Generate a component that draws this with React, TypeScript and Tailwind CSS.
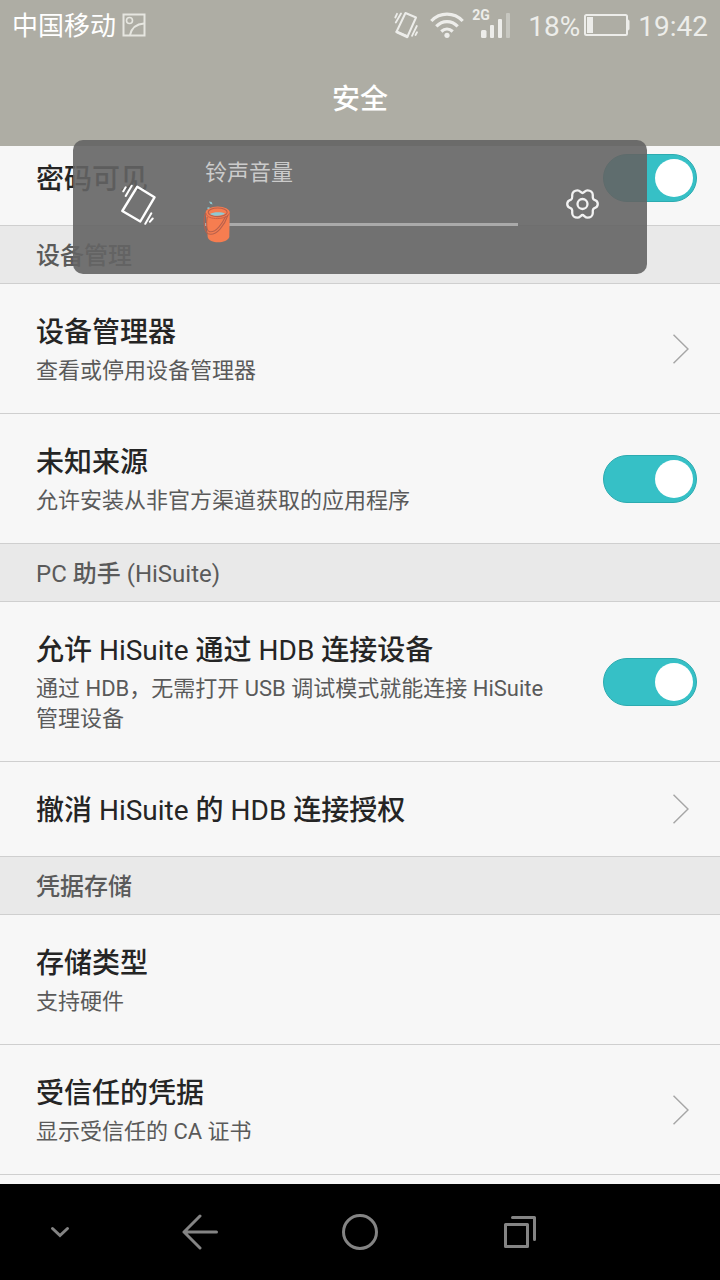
import { useState } from "react";

type Item = {
  id: string;
  title: string;
  summary?: string;
  kind: "switch" | "link" | "plain";
};

type Group = {
  heading?: string;
  items: Item[];
};

const groups: Group[] = [
  {
    items: [{ id: "password-visible", title: "密码可见", kind: "switch" }],
  },
  {
    heading: "设备管理",
    items: [
      {
        id: "device-admin",
        title: "设备管理器",
        summary: "查看或停用设备管理器",
        kind: "link",
      },
      {
        id: "unknown-sources",
        title: "未知来源",
        summary: "允许安装从非官方渠道获取的应用程序",
        kind: "switch",
      },
    ],
  },
  {
    heading: "PC 助手 (HiSuite)",
    items: [
      {
        id: "hdb",
        title: "允许 HiSuite 通过 HDB 连接设备",
        summary: "通过 HDB，无需打开 USB 调试模式就能连接 HiSuite 管理设备",
        kind: "switch",
      },
      { id: "revoke-hdb", title: "撤消 HiSuite 的 HDB 连接授权", kind: "link" },
    ],
  },
  {
    heading: "凭据存储",
    items: [
      {
        id: "storage-type",
        title: "存储类型",
        summary: "支持硬件",
        kind: "plain",
      },
      {
        id: "trusted",
        title: "受信任的凭据",
        summary: "显示受信任的 CA 证书",
        kind: "link",
      },
    ],
  },
];

// Latin words stay regular while the Chinese around them is medium
const MixedText = ({ text }: { text: string }) => (
  <>
    {text.split(/([A-Za-z() ]+)/).map((part, i) =>
      i % 2 ? (
        <span key={i} className="font-normal">
          {part}
        </span>
      ) : (
        part
      )
    )}
  </>
);

const StatusBar = () => (
  <div className="flex h-[50px] items-center justify-between px-3">
    <div className="flex items-center gap-1.5">
      <span className="pt-0.5 text-[26px] leading-[50px] text-white">中国移动</span>
      <svg width="24" height="24" viewBox="0 0 24 24" fill="none" stroke="#e6e6e0" strokeWidth="2">
        <rect x="1.5" y="1.5" width="21" height="21" />
        <circle cx="7.5" cy="7.5" r="3" strokeWidth="1.6" />
        <path d="M8 22 C9.5 15.5 14.5 11 22 10.5" />
      </svg>
    </div>

    <div className="flex items-center text-[#ededea]">
      <svg width="24" height="28" viewBox="0 0 24 28" fill="none" stroke="currentColor" strokeLinecap="round">
        <path d="M11.5 2 L22 6.5 L13.5 25.5 L2.5 20.8 Z" strokeWidth="2" strokeLinejoin="round" />
        <path d="M3 21 L13 25.6" strokeWidth="3" />
        <path d="M1.3 6.5 L3 2.8 M1.8 11.5 L7 2.5 M18 24.8 L22.8 15 M21.5 24 L23 21.2" strokeWidth="1.8" />
      </svg>
      <svg className="ml-3" width="34" height="28" viewBox="0 0 34 28" fill="none" stroke="currentColor" strokeWidth="3.2">
        <path d="M1.3 10 C10 0.8 24 0.8 32.7 10" />
        <path d="M6.3 15.4 C12.5 9 21.5 9 27.7 15.4" />
        <path d="M11.3 20.5 C14.8 17.2 19.2 17.2 22.7 20.5" />
        <circle cx="17" cy="24.3" r="2.6" fill="currentColor" stroke="none" />
      </svg>
      <div className="relative ml-2 h-7 w-10">
        <span className="absolute -top-1 left-0 text-sm font-bold leading-4">2G</span>
        <svg width="40" height="28" viewBox="0 0 40 28" fill="currentColor">
          <rect x="9" y="19" width="5.5" height="8" rx="1.5" />
          <rect x="18" y="14" width="4" height="13" rx="1" />
          <rect x="26" y="8" width="4" height="19" rx="1" />
          <rect x="34" y="2" width="4" height="25" rx="1" opacity="0.4" />
        </svg>
      </div>
      <span className="ml-4 pt-1 text-[28px] leading-[46px]">18%</span>
      <svg className="ml-1" width="46" height="24" viewBox="0 0 46 24" fill="none">
        <rect x="1" y="2" width="42" height="20" rx="1.5" stroke="currentColor" strokeWidth="2" />
        <rect x="3" y="4" width="6" height="16" fill="currentColor" />
        <path d="M43 7 h1 a1 1 0 0 1 1 1 v8 a1 1 0 0 1 -1 1 h-1 z" fill="currentColor" stroke="currentColor" />
      </svg>
      <span className="ml-2 pt-1 text-[28px] leading-[46px]">19:42</span>
    </div>
  </div>
);

const Chevron = () => (
  <svg className="mr-2 shrink-0" width="16" height="30" viewBox="0 0 16 30" fill="none" stroke="#a6a6a6" strokeWidth="1.5">
    <path d="M0.5 0.8 L15 15 L0.5 29.2" />
  </svg>
);

const Switch = ({ id }: { id: string }) => {
  const [on, setOn] = useState(true);
  return (
    <span className="relative h-12 w-[94px] shrink-0">
      <input
        id={id}
        type="checkbox"
        checked={on}
        onChange={() => setOn(!on)}
        className="peer block h-12 w-[94px] cursor-pointer appearance-none rounded-full border border-[#b5b5b5] bg-[#c8c8c8] checked:border-[#2cabb0] checked:bg-[#36c0c6]"
      />
      <span className="pointer-events-none absolute left-1 top-[5px] size-[38px] rounded-full bg-white peer-checked:left-auto peer-checked:right-1" />
    </span>
  );
};

const rowClass =
  "flex w-full items-center justify-between border-b border-[#cfcfcf] py-[27px] pl-9 pr-[23px] text-left";

const Row = ({ item }: { item: Item }) => {
  const text = (
    <span className="block max-w-[calc(100%-150px)]">
      <span className="block pt-1 text-[28px] font-medium leading-9 text-[#252525]">
        <MixedText text={item.title} />
      </span>
      {item.summary && (
        <span className="block pt-[5px] text-[22px] leading-[30px] text-[#5a5a5a]">
          {item.summary}
        </span>
      )}
    </span>
  );

  if (item.kind === "switch") {
    return (
      <label htmlFor={item.id} className={rowClass}>
        {text}
        <span className="-my-1 flex">
          <Switch id={item.id} />
        </span>
      </label>
    );
  }
  if (item.kind === "link") {
    return (
      <a href={`#${item.id}`} className={rowClass}>
        {text}
        <Chevron />
      </a>
    );
  }
  return <div className={rowClass}>{text}</div>;
};

const Bucket = () => (
  <svg width="28" height="44" viewBox="0 0 28 44">
    <path d="M2.7 13 L4.7 37 C6 44 24 44 26.3 37 L26.7 12 Z" fill="#f67d50" />
    <ellipse cx="14.7" cy="12.5" rx="12" ry="6" fill="#f67d50" />
    <path d="M2.8 13 C3.5 21 26 20 26.6 12.5" fill="none" stroke="#c9624a" />
    <ellipse cx="14.7" cy="12.3" rx="9.5" ry="4.3" fill="#f67d50" stroke="#b9614c" strokeWidth="1.1" />
    <path d="M7 14 C10 11.8 19 11.8 22 13.6 C19 16.4 10 16.4 7 14 Z" fill="#8fc9d3" />
    <path
      d="M2.6 13 C0.4 18 0.6 31 5 33.8 C14 36.5 22 24 25 15 M4.2 17 C3 24 3.6 31 6.5 31.6 C13 33 19.5 23 22.6 16.5"
      fill="none"
      stroke="#b9614c"
      strokeWidth="1.1"
    />
    <path d="M6 1.5 L8.6 2 L9.6 4.4 L7.2 3.8 Z M4.8 7.2 L6.8 7.5 L6 9 L4 8.6 Z" fill="#8fc9d3" />
  </svg>
);

const VolumePanel = () => {
  const [volume, setVolume] = useState(0);
  return (
    <div className="absolute inset-x-[73px] top-[140px] flex h-[134px] items-center rounded-[10px] bg-[#646464]/90 pb-1.5">
      <button type="button" aria-label="振动" className="flex w-[132px] justify-center pr-0.5">
        <svg width="36" height="42" viewBox="0 0 36 42" fill="none" stroke="#fff" strokeLinecap="round">
          <path d="M17.3 3.7 L34.5 14.3 L20.3 38.5 L2.3 28 Z" strokeWidth="2.4" strokeLinejoin="round" />
          <path d="M3.3 8.3 L5.7 4.3 M5.7 13 L11.7 2.7 M25.3 40.8 L31.3 30.3 M29.8 38.8 L32.7 35.5" strokeWidth="2" />
        </svg>
      </button>
      <div className="flex-1 self-start pt-[18px]">
        <label htmlFor="ring-volume" className="block text-[22px] leading-[30px] text-[#cbcbcb]">
          铃声音量
        </label>
        <div className="relative mt-3 flex h-11 items-center pt-1">
          <div className="h-[3px] w-full bg-[#aaa]" />
          <div
            className="pointer-events-none absolute -left-0.5 top-0"
            style={{ marginLeft: `${volume * 0.9}%` }}
          >
            <Bucket />
          </div>
          <input
            id="ring-volume"
            type="range"
            min={0}
            max={100}
            value={volume}
            onChange={(e) => setVolume(Number(e.target.value))}
            className="absolute inset-0 h-full w-full opacity-0"
          />
        </div>
      </div>
      <button type="button" aria-label="设置" className="flex w-[129px] justify-center">
        <svg width="33" height="30" viewBox="0 0 33 30" fill="none" stroke="#f2f2f2" strokeWidth="2.3" strokeLinejoin="round">
          <path d="M16.5 4 C18 4 19 1.3 21.5 1.3 C24.5 1.3 26.8 3.5 26.8 6 C26.8 8 26.3 9.8 28 10.6 C30.5 11.4 31.8 12.8 31.8 15 C31.8 17.2 30.5 18.6 28 19.4 C26.3 20.2 26.8 22 26.8 24 C26.8 26.5 24.5 28.7 21.5 28.7 C19 28.7 18 26 16.5 26 C15 26 14 28.7 11.5 28.7 C8.5 28.7 6.2 26.5 6.2 24 C6.2 22 6.7 20.2 5 19.4 C2.5 18.6 1.2 17.2 1.2 15 C1.2 12.8 2.5 11.4 5 10.6 C6.7 9.8 6.2 8 6.2 6 C6.2 3.5 8.5 1.3 11.5 1.3 C14 1.3 15 4 16.5 4 Z" />
          <circle cx="16.5" cy="15" r="5" />
        </svg>
      </button>
    </div>
  );
};

const navButton = "flex h-full flex-1 items-center justify-center";

const NavBar = () => (
  <nav className="flex h-24 bg-black text-[#848484]">
    <button type="button" aria-label="隐藏" className="flex h-full w-[120px] items-center justify-center">
      <svg width="20" height="12" viewBox="0 0 20 12" fill="none" stroke="currentColor" strokeWidth="3" strokeLinecap="round">
        <path d="M2.5 2.5 L10 9.5 L17.5 2.5" />
      </svg>
    </button>
    <button type="button" aria-label="返回" className={navButton}>
      <svg width="36" height="36" viewBox="0 0 36 36" fill="none" stroke="currentColor" strokeWidth="3" strokeLinecap="round" strokeLinejoin="round">
        <path d="M18 2 L2 18 L18 34 M2 18 H34.5" />
      </svg>
    </button>
    <button type="button" aria-label="主屏幕" className={navButton}>
      <svg width="36" height="36" viewBox="0 0 36 36" fill="none" stroke="currentColor" strokeWidth="3">
        <circle cx="18" cy="18" r="16.5" />
      </svg>
    </button>
    <button type="button" aria-label="最近任务" className={navButton}>
      <svg width="32" height="32" viewBox="0 0 32 32" fill="none" stroke="currentColor" strokeWidth="3" strokeLinejoin="round" strokeLinecap="round">
        <rect x="1.5" y="8.5" width="22" height="22" />
        <path d="M8.5 1.5 H30.5 V23.5" />
      </svg>
    </button>
    <div className="w-[120px]" />
  </nav>
);

const App = () => {
  return (
    <div className="relative flex min-h-screen flex-col bg-[#f7f7f7] font-[Roboto,'Noto_Sans_CJK_SC',sans-serif]">
      <header className="relative h-[146px] bg-[#aeada4]">
        <StatusBar />
        <h1 className="pt-1 text-center text-[28px] font-medium leading-[92px] text-white">安全</h1>
      </header>

      {/* the list is scrolled a little way under the header */}
      <main className="-mt-[15px] flex-1">
        {groups.map((group, i) => (
          <section key={i}>
            {group.heading && (
              <h2 className="border-b border-[#cfcfcf] bg-[#e9e9e9] pl-9 pt-1 text-2xl font-medium leading-[53px] text-[#5a5a5a]">
                <MixedText text={group.heading} />
              </h2>
            )}
            {group.items.map((item) => (
              <Row key={item.id} item={item} />
            ))}
          </section>
        ))}
      </main>

      <NavBar />
      <VolumePanel />
    </div>
  );
};

export default App;
